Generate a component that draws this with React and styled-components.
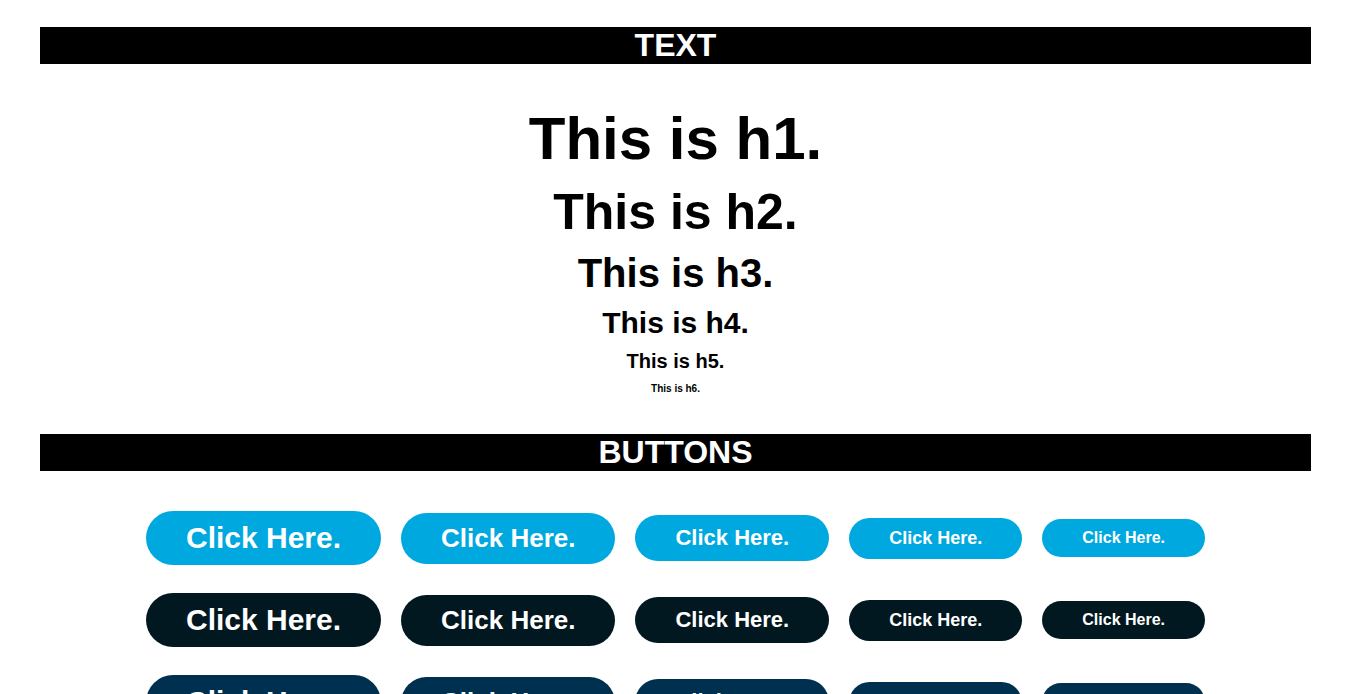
import styled, { createGlobalStyle } from "styled-components";

// styles
const GlobalStyle = createGlobalStyle`
    html, body {
        margin: 0;
        padding: 0;
        background: #fff;
        font-family: "Liberation Sans", Arial, sans-serif;
    }
`;

const Page = styled.div`
    padding: 27px 40px 0;
`;

const SectionTitle = styled.h2`
    margin: 0;
    background: #000;
    color: #fff;
    font-size: 32px;
    font-weight: bold;
    text-align: center;
    line-height: 37px;
`;

const HeadingList = styled.div`
    display: flex;
    flex-direction: column;
    align-items: center;
    gap: 10px;
    padding: 40px 0;
`;

const Heading = styled.div`
    margin: 0;
    font-weight: bold;
    color: #000;
    font-size: ${(p) => p.$size}px;
    line-height: normal;
`;

const ButtonGrid = styled.div`
    display: flex;
    flex-direction: column;
    gap: 28px;
    padding-top: 40px;
`;

const ButtonRow = styled.div`
    display: flex;
    justify-content: center;
    align-items: center;
    gap: 20px;
`;

const Button = styled.button`
    border: none;
    border-radius: 50px;
    padding: 10px 40px;
    background: ${(p) => p.$bg};
    color: #fff;
    font-family: "Liberation Sans", Arial, sans-serif;
    font-weight: bold;
    font-size: ${(p) => p.$size}px;
    line-height: normal;
    cursor: pointer;
`;

const headings = [
    { tag: "h1", size: 60 },
    { tag: "h2", size: 50 },
    { tag: "h3", size: 40 },
    { tag: "h4", size: 30 },
    { tag: "h5", size: 20 },
    { tag: "h6", size: 10 },
];

const rowColors = ["#00a8e0", "#011820", "#00304f"];
const buttonSizes = [30, 26, 22, 18, 16];

// component
const App = () => {
    return (
        <>
            <GlobalStyle />
            <Page>
                <SectionTitle>TEXT</SectionTitle>
                <HeadingList>
                    {headings.map((h) => (
                        <Heading as={h.tag} key={h.tag} $size={h.size}>
                            This is {h.tag}.
                        </Heading>
                    ))}
                </HeadingList>
                <SectionTitle>BUTTONS</SectionTitle>
                <ButtonGrid>
                    {rowColors.map((color) => (
                        <ButtonRow key={color}>
                            {buttonSizes.map((size) => (
                                <Button key={size} $bg={color} $size={size}>
                                    Click Here.
                                </Button>
                            ))}
                        </ButtonRow>
                    ))}
                </ButtonGrid>
            </Page>
        </>
    );
};

export default App;
